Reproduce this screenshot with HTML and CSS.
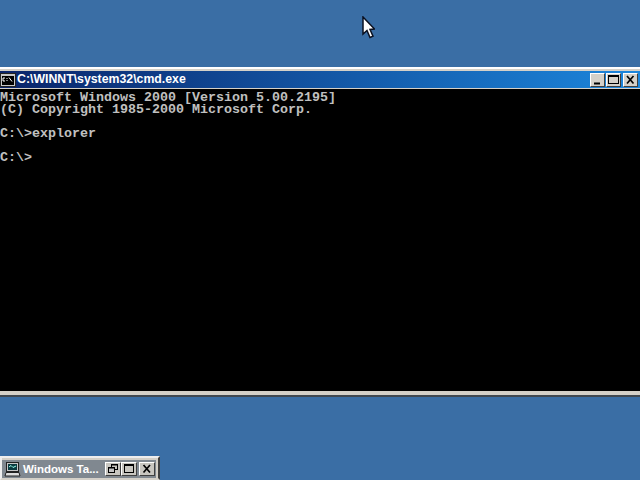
FILE: index.html
```html
<!DOCTYPE html>
<html lang="en">
<head>
<meta charset="utf-8">
<title>cmd.exe</title>
<link rel="stylesheet" href="styles.css">
</head>
<body>
<svg class="cursor" width="13" height="23" viewBox="0 0 13 23"><path d="M1 1V18L5 14.500L8 21.500L11 20.200L8 13.500L12.500 13Z" fill="#fff" stroke="#0a1020" stroke-width="1.500"/></svg>
<section class="window console-window">
  <header class="titlebar">
    <svg class="cmd-icon" width="16" height="14" viewBox="0 0 16 14"><rect x=".5" y=".5" width="15" height="13" fill="#c8c8c8" stroke="#222"/><rect x="2" y="3" width="12" height="9" fill="#000"/><path d="M3 5H5M3 5V8H5M7 5V6M7 7V8M9 4.500L12 8.500" stroke="#fff" fill="none"/></svg>
    <span class="title">C:\WINNT\system32\cmd.exe</span>
    <div class="buttons">
      <span class="btn"><svg width="13" height="12" viewBox="0 0 13 12"><path d="M3 9.500H9" stroke="#000" stroke-width="2"/></svg></span>
      <span class="btn"><svg width="13" height="12" viewBox="0 0 13 12"><path d="M2 2.500H11" stroke="#000"/><rect x="1.500" y="1.500" width="10" height="8" fill="none" stroke="#000"/></svg></span>
      <span class="btn btn-close"><svg width="13" height="12" viewBox="0 0 13 12"><path d="M3 2L9.500 9.500M9.500 2L3 9.500" stroke="#000" stroke-width="1.700"/></svg></span>
    </div>
  </header>
  <pre class="console">Microsoft Windows 2000 [Version 5.00.2195]
(C) Copyright 1985-2000 Microsoft Corp.

C:\&gt;explorer

C:\&gt;</pre>
</section>
<section class="window task-window">
  <header class="task-bar">
    <svg class="task-icon" width="17" height="16" viewBox="0 0 17 16"><rect x="2.500" y="1.500" width="12" height="9" fill="#c8c8c8" stroke="#222"/><rect x="4" y="3" width="9" height="6" fill="#0a3a40"/><path d="M5 6L7 4.500L9 6.500L12 5" stroke="#9fe" fill="none"/><path d="M1 15L2 11.500H15L16 15Z" fill="#ddd" stroke="#222"/></svg>
    <span class="task-title">Windows Ta...</span>
    <div class="task-buttons">
      <span class="tbtn"><svg width="14" height="12" viewBox="0 0 14 12"><rect x="5.500" y="1.500" width="6" height="5" fill="none" stroke="#000"/><rect x="2.500" y="4.500" width="6" height="5" fill="#c4c4c4" stroke="#000"/><path d="M5 2H12M2 5H9" stroke="#000"/></svg></span>
      <span class="tbtn"><svg width="14" height="12" viewBox="0 0 14 12"><path d="M3 2.500H11" stroke="#000"/><rect x="2.500" y="1.500" width="9" height="8" fill="none" stroke="#000"/></svg></span>
      <span class="tbtn tbtn-close"><svg width="14" height="12" viewBox="0 0 14 12"><path d="M3.500 2L10 9.500M10 2L3.500 9.500" stroke="#000" stroke-width="1.700"/></svg></span>
    </div>
  </header>
</section>
</body>
</html>
```
FILE: styles.css
```css
html, body {
  margin: 0;
  height: 100%;
  overflow: hidden;
  background: #3a6ea5;
}
body {
  position: relative;
  width: 640px;
  height: 480px;
}
.cursor {
  position: absolute;
  left: 362px;
  top: 16px;
}
.window {
  position: absolute;
  box-sizing: border-box;
  background: #d4d0c8;
}
.console-window {
  left: 0;
  top: 67px;
  width: 640px;
  height: 330px;
  border-top: 2px solid #fff;
  border-bottom: 2px solid #404850;
  padding: 2px 0 4px;
  display: flex;
  flex-direction: column;
  gap: 1px;
}
.titlebar {
  height: 17px;
  flex: none;
  display: flex;
  align-items: center;
  background: linear-gradient(90deg, #0a246a, #1c86dc);
  gap: 1px;
  padding-right: 2px;
}
.cmd-icon {
  flex: none;
}
.title {
  font: bold 12.300px/17px "Liberation Sans", sans-serif;
  color: #fff;
  white-space: nowrap;
}
.buttons {
  margin-left: auto;
  display: flex;
  align-items: center;
  gap: 1px;
  height: 14px;
}
.btn {
  display: block;
  width: 15px;
  height: 14px;
  box-sizing: border-box;
  background: #d4d0c8;
  border: 1px solid;
  border-color: #fff #404040 #404040 #fff;
  line-height: 0;
}
.btn svg {
  display: block;
}
.btn-close {
  margin-left: 1px;
}
.console {
  flex: 1;
  margin: 0;
  background: #000;
  color: #c0c0c0;
  padding: 3px 0 0;
  font: bold 13.33px/12px "Liberation Mono", monospace;
  overflow: hidden;
}
.task-window {
  left: 0;
  top: 456px;
  width: 160px;
  height: 24px;
  border: 2px solid;
  border-color: #eee #404040 transparent #eee;
  padding: 2px 2px 0 0;
}
.task-bar {
  height: 18px;
  display: flex;
  align-items: center;
  background: #808890;
  gap: 2px;
  padding: 0 1px 0 2px;
}
.task-icon {
  flex: none;
}
.task-title {
  font: bold 11.500px/18px "Liberation Sans", sans-serif;
  color: #fff;
  white-space: nowrap;
}
.task-buttons {
  margin-left: auto;
  display: flex;
  align-items: center;
}
.tbtn {
  display: block;
  width: 16px;
  height: 14px;
  box-sizing: border-box;
  background: #c8c6c0;
  border: 1px solid;
  border-color: #fff #404040 #404040 #fff;
  line-height: 0;
}
.tbtn svg {
  display: block;
}
.tbtn-close {
  margin-left: 2px;
}
```
